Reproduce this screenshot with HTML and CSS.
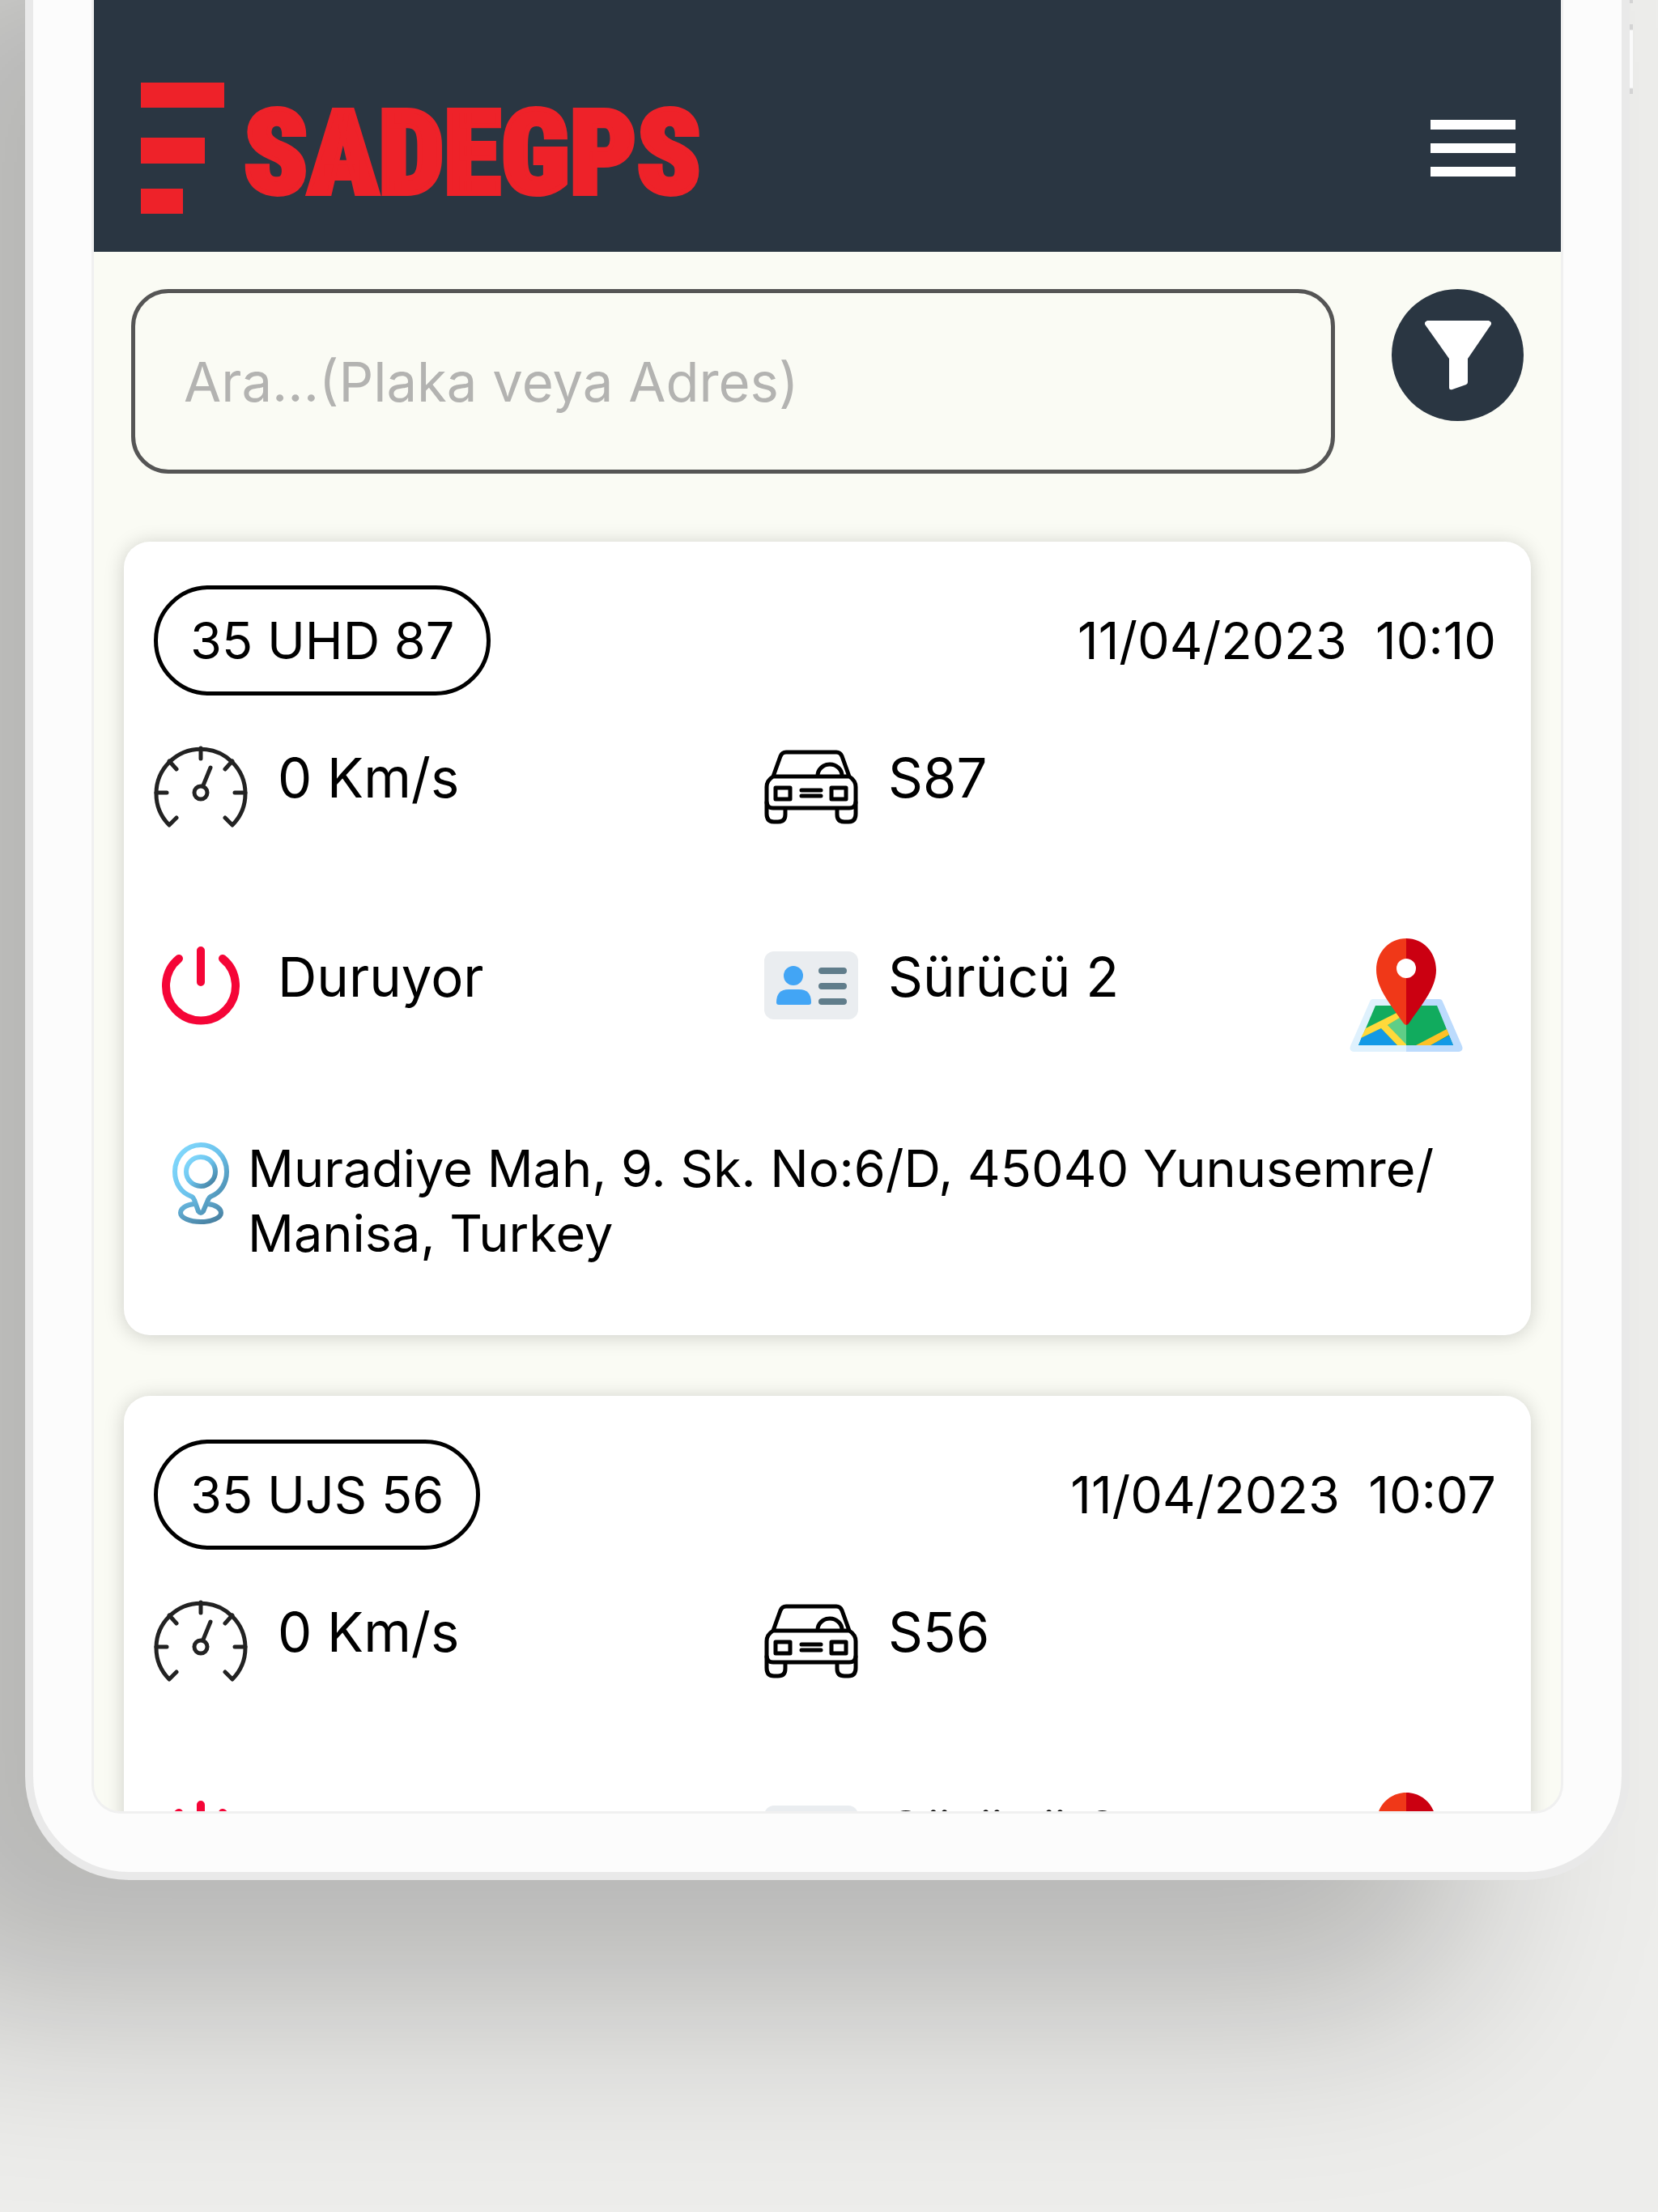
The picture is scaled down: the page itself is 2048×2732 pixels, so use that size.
FILE: index.html
```html
<!DOCTYPE html>
<html lang="tr">
<head>
<meta charset="utf-8">
<meta name="viewport" content="width=device-width, initial-scale=1">
<title>SADEGPS</title>
<link rel="stylesheet" href="styles.css">
</head>
<body>
<svg class="sprite" aria-hidden="true">
  <defs>
    <linearGradient id="pin-blue" x1="0" y1="0" x2="1" y2="1">
      <stop offset="0.1" stop-color="#7fd6fb"/>
      <stop offset="0.5" stop-color="#6bc2ec"/>
      <stop offset="1" stop-color="#3f7796"/>
    </linearGradient>
    <linearGradient id="base-blue" x1="0" y1="0" x2="1" y2="1">
      <stop offset="0" stop-color="#66b6de"/>
      <stop offset="1" stop-color="#467c9c"/>
    </linearGradient>
    <symbol id="gauge" viewBox="0 0 116 116">
      <g fill="none" stroke="#222" stroke-width="5" stroke-linecap="round" stroke-linejoin="round">
        <path d="M28 97 19 106A55 55 0 1 1 97 106L88 97"/>
        <path d="M58 11v13M19 27l9 10M97 27l-9 10M3 66h13M113 66h-13M61 57l9-22"/>
        <circle cx="58" cy="66" r="8"/>
      </g>
    </symbol>
    <symbol id="car" viewBox="0 0 116 116">
      <g fill="none" stroke="#000" stroke-width="5" stroke-linecap="round" stroke-linejoin="round">
        <path d="M11 46 20 21q2-5 7-5h62q5 0 7 5l9 25M11 46h94M11 46q-8 5-8 13v18q0 8 8 8h94q8 0 8-8V59q0-8-8-13"/>
        <path d="M3 78v14q0 10 9 10h5q9 0 9-9v-7M113 78v14q0 10-9 10h-5q-9 0-9-9v-7M66 45a15 14 0 0 1 30 0"/>
        <path d="M14 60h18v14H14zM83 60h18v14H83zM46 63h24M46 70h24"/>
      </g>
    </symbol>
    <symbol id="power" viewBox="0 0 116 116">
      <path d="M31 25A43 43 0 1 0 85 25M58 15v39" fill="none" stroke="#f50537" stroke-width="10" stroke-linecap="round"/>
    </symbol>
    <symbol id="idcard" viewBox="0 0 116 116">
      <rect y="16" width="116" height="84" rx="12" fill="#eaedf0"/>
      <circle cx="36" cy="46" r="12" fill="#42a5f5"/>
      <path d="M15 79q0-16 15-16h13q15 0 15 16 0 3-3 3H18q-3 0-3-3z" fill="#42a5f5"/>
      <path d="M71 40h27M71 59h27M71 78h27" stroke="#607d8b" stroke-width="8" stroke-linecap="round"/>
    </symbol>
    <symbol id="pin" viewBox="0 0 116 116">
      <g fill="none" stroke="url(#pin-blue)" stroke-width="6" stroke-linejoin="round">
        <path d="M47 75C33 70 26 58 26 44A32 33 0 0 1 90 44C90 58 83 70 70 75q-2 1-3 4l-6 14q-3 4-6 0l-5-14q-1-3-3-4z"/>
        <circle cx="58" cy="44" r="18"/>
        <path stroke="url(#base-blue)" d="M50 84C39 85 33 90 33 95c0 6 11 11 25 11s25-5 25-11c0-5-6-10-16-11"/>
      </g>
    </symbol>
    <symbol id="map" viewBox="0 0 140 140">
      <path d="M29 75h41v65H5q-6-1-4-7L25 78q1-3 4-3z" fill="#dff1fd"/>
      <path d="M70 75h41q3 0 4 3l24 55q2 6-4 7H70z" fill="#bcdbfd"/>
      <path d="M32 83h76l20 49H11z" fill="#11ab5e"/>
      <path d="M47 107 70 93v39z" fill="#5fce87"/>
      <path d="M39 111 59 132H11l4-10z" fill="#1399e6"/>
      <path d="M100 132l23-12 5 12z" fill="#1399e6"/>
      <path d="M20 111 58 92l4 6-15 9 23 24v1H59L39 111 14 123z" fill="#ffd93b"/>
      <path d="M82 132l38-20 3 7-23 13z" fill="#fec127"/>
      <path d="M70 0v107q-2 0-4-3C52 83 33 62 33 39 33 17 49 0 70 0z" fill="#f03818"/>
      <path d="M70 0v107q2 0 4-3C88 83 107 62 107 39 107 17 91 0 70 0z" fill="#cb0011"/>
      <circle cx="70" cy="37" r="12" fill="#fff"/>
    </symbol>
  </defs>
</svg>

<div class="device">
  <div class="screen">
    <header class="topbar">
      <a class="brand" href="#">
        <svg class="brand-mark" viewBox="0 0 103 162" aria-hidden="true"><path d="M0 0h103v31H0zM0 68h79v32H0zM0 131h52v31H0z" fill="#ee2229"/></svg>
        <span class="brand-name">SADEGPS</span>
      </a>
      <button class="menu" type="button" aria-label="Menü">
        <svg viewBox="0 0 105 71" aria-hidden="true"><path d="M0 0h105v12H0zM0 29h105v12H0zM0 58h105v12H0z" fill="#fff"/></svg>
      </button>
    </header>

    <main class="content">
      <form class="search">
        <input class="search-input" type="text" aria-label="Ara" placeholder="Ara...(Plaka veya Adres)">
        <button class="filter" type="button" aria-label="Filtrele">
          <svg viewBox="0 0 82 86" aria-hidden="true"><path d="M3 0h76q5 2 2 6L53 47v29q0 2-2 3l-17 6q-4 1-4-2V47L1 6q-3-4 2-6z" fill="#fff"/></svg>
        </button>
      </form>

      <article class="card">
        <div class="card-head">
          <span class="plate">35 UHD 87</span>
          <time datetime="2023-04-11T10:10">11/04/2023&nbsp; 10:10</time>
        </div>
        <div class="facts">
          <div class="fact"><svg class="icon"><use href="#gauge"/></svg><span>0 Km/s</span></div>
          <div class="fact"><svg class="icon"><use href="#car"/></svg><span>S87</span></div>
          <div class="fact fact-row2"><svg class="icon"><use href="#power"/></svg><span>Duruyor</span></div>
          <div class="fact fact-row2"><svg class="icon"><use href="#idcard"/></svg><span>Sürücü 2</span></div>
          <a class="map-link" href="#" aria-label="Haritada göster"><svg class="map-icon"><use href="#map"/></svg></a>
        </div>
        <div class="address"><svg class="icon"><use href="#pin"/></svg><p>Muradiye Mah, 9. Sk. No:6/D, 45040 Yunusemre/<wbr>Manisa, Turkey</p></div>
      </article>

      <article class="card">
        <div class="card-head">
          <span class="plate">35 UJS 56</span>
          <time datetime="2023-04-11T10:07">11/04/2023&nbsp; 10:07</time>
        </div>
        <div class="facts">
          <div class="fact"><svg class="icon"><use href="#gauge"/></svg><span>0 Km/s</span></div>
          <div class="fact"><svg class="icon"><use href="#car"/></svg><span>S56</span></div>
          <div class="fact fact-row2"><svg class="icon"><use href="#power"/></svg><span>Duruyor</span></div>
          <div class="fact fact-row2"><svg class="icon"><use href="#idcard"/></svg><span>Sürücü 2</span></div>
          <a class="map-link" href="#" aria-label="Haritada göster"><svg class="map-icon"><use href="#map"/></svg></a>
        </div>
      </article>
    </main>
  </div>
</div>
</body>
</html>
```
FILE: styles.css
```css
* {
  box-sizing: border-box;
}

body {
  margin: 0;
  height: 100vh;
  padding: 0 35px 410px 31px;
  display: flex;
  overflow: hidden;
  background: #ededeb;
  color: #000;
  font-family: Inter, "Noto Sans", sans-serif;
  font-size: 63px;
  line-height: 80px;
}

svg {
  display: block;
}

.sprite {
  position: absolute;
  width: 0;
  height: 0;
}

/* The tablet runs off the top edge of the window. */
.device {
  position: relative;
  flex: 1;
  min-width: 0;
  display: flex;
  margin-top: -260px;
  padding: 260px 72px 72px;
  border: 10px solid #e9e9e9;
  border-top: 0;
  border-radius: 0 0 128px 128px;
  background: #fcfcfc;
  box-shadow: -200px 160px 240px rgba(0, 0, 0, 0.23);
}

/* Volume keys on the right-hand edge. */
.device::before,
.device::after {
  content: "";
  position: absolute;
  top: 290px;
  right: -14px;
  width: 4px;
  height: 86px;
  background: linear-gradient(#d4d4d4 6px, #fafafa 8px, #fafafa 78px, #d4d4d4 80px);
}

.device::before {
  top: 178px;
}

.screen {
  flex: 1;
  min-width: 0;
  overflow: hidden;
  border: 3px solid #f0f0f0;
  border-top: 0;
  border-radius: 0 0 36px 36px;
  background: #fafbf4;
}

.topbar {
  display: flex;
  justify-content: space-between;
  align-items: center;
  height: 311px;
  padding: 55px 56px 0 58px;
  background: #2a3642;
}

.brand {
  display: flex;
  align-items: center;
  gap: 24px;
  color: #ee2229;
  text-decoration: none;
}

.brand-mark {
  width: 103px;
  height: 162px;
}

.brand-name {
  padding-top: 14px;
  font-family: "Roboto Condensed", Roboto, sans-serif;
  font-size: 144px;
  font-weight: 900;
  line-height: 148px;
  -webkit-text-stroke: 6px #ee2229;
}

.menu {
  padding: 0;
  border: 0;
  background: none;
}

.menu svg {
  width: 105px;
  height: 71px;
}

.content {
  padding: 46px 37px;
}

.search {
  display: flex;
  align-items: flex-start;
  gap: 70px;
  padding: 0 9px;
  margin-bottom: 84px;
}

.search-input {
  flex: 1;
  min-width: 0;
  height: 228px;
  padding: 0 60px;
  border: 5px solid #555;
  border-radius: 46px;
  outline: 0;
  background: transparent;
  color: #000;
  font: inherit;
  font-size: 67px;
}

.search-input::placeholder {
  color: #b3b3b1;
  opacity: 1;
}

.filter {
  display: grid;
  place-items: center;
  width: 163px;
  height: 163px;
  padding: 0;
  border: 0;
  border-radius: 50%;
  background: #2a3642;
}

.filter svg {
  width: 82px;
  height: 86px;
}

.card {
  padding: 54px 37px 86px;
  margin-bottom: 75px;
  border-radius: 32px;
  background: #fff;
  box-shadow: 0 2px 24px rgba(0, 0, 0, 0.18);
}

.card-head {
  display: flex;
  justify-content: space-between;
  align-items: center;
  padding-right: 6px;
}

.plate {
  padding: 23px 40px;
  border: 5px solid #000;
  border-radius: 68px;
}

.facts {
  display: grid;
  grid-template-columns: 754fr 676fr 234fr;
  row-gap: 130px;
  margin-top: 54px;
}

.fact {
  display: flex;
  gap: 37px;
  font-size: 67px;
  line-height: 96px;
}

.fact-row2 {
  grid-row: 2;
}

.icon {
  flex: none;
  width: 116px;
  height: 116px;
}

.map-link {
  grid-row: 2;
  grid-column: 3;
  justify-self: center;
}

.map-icon {
  width: 140px;
  height: 140px;
}

.address {
  display: flex;
  margin-top: 104px;
}

.address p {
  margin: 0;
}
```
